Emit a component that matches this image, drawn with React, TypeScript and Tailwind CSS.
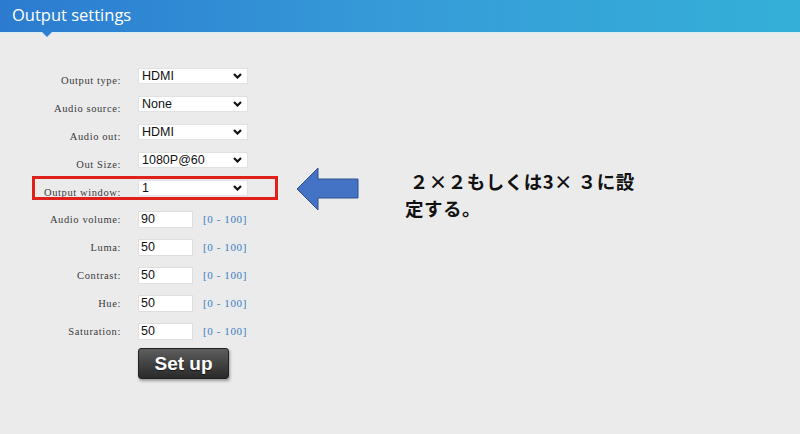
const selects = [
  { label: 'Output type:', value: 'HDMI' },
  { label: 'Audio source:', value: 'None' },
  { label: 'Audio out:', value: 'HDMI' },
  { label: 'Out Size:', value: '1080P@60' },
  { label: 'Output window:', value: '1' },
];

const inputs = [
  { label: 'Audio volume:', value: '90' },
  { label: 'Luma:', value: '50' },
  { label: 'Contrast:', value: '50' },
  { label: 'Hue:', value: '50' },
  { label: 'Saturation:', value: '50' },
];

const labelCls =
  "w-[121px] text-right font-['Liberation_Serif',serif] text-[10.5px] tracking-[0.6px] text-[#3a3a3a]";

const Chevron = () => (
  <svg width="9" height="6" viewBox="0 0 9 6" className="shrink-0">
    <polyline points="1,1 4.5,4.5 8,1" fill="none" stroke="#111" strokeWidth="2.2" />
  </svg>
);

const App = () => {
  return (
    <div className="relative w-[800px] h-[434px] overflow-hidden bg-[#ebebec] font-['Liberation_Sans',Arial,sans-serif]">
      {/* header */}
      <div className="h-[32px] bg-gradient-to-r from-[#2c7bd0] via-[#369bd8] to-[#34b0d8] flex items-center pl-[12px]">
        <span className="text-white text-[16.5px] font-['Open_Sans',sans-serif] leading-none pb-[2px]">
          Output settings
        </span>
      </div>
      <div className="h-[1px] bg-[#d6eef8]" />
      <div className="absolute left-[42px] top-[32px] w-0 h-0 border-l-[5px] border-r-[5px] border-t-[5px] border-l-transparent border-r-transparent border-t-[#2f80d1]" />

      <div className="flex pt-[35px]">
        {/* form */}
        <div className="flex flex-col w-[290px]">
          {selects.map((s) => (
            <div key={s.label} className="flex items-start h-[28px]">
              <div className={`${labelCls} pt-[5px]`}>{s.label}</div>
              <div className="ml-[17px] w-[110px] h-[16px] bg-white border border-[#e2e2e2] flex items-center justify-between pl-[3px] pr-[5px]">
                <span className="text-[12.5px] text-[#111] leading-none">{s.value}</span>
                <Chevron />
              </div>
            </div>
          ))}
          {inputs.map((s) => (
            <div key={s.label} className="flex items-start h-[28px] pt-[3px]">
              <div className={`${labelCls} leading-[17px]`}>{s.label}</div>
              <div className="ml-[17px] w-[55px] h-[17px] bg-white border border-[#dedede] flex items-center pl-[2px]">
                <span className="text-[12.5px] text-[#111] leading-none">{s.value}</span>
              </div>
              <span className="ml-[10px] leading-[17px] font-['Liberation_Serif',serif] text-[11px] tracking-[0.6px] text-[#3a80c2]">
                [0 - 100]
              </span>
            </div>
          ))}
          <div className="ml-[138px]">
            <button className="w-[91px] h-[31px] rounded-[3px] bg-gradient-to-b from-[#5e5e5e] to-[#2a2a2a] border border-[#222] shadow-[1px_2px_3px_rgba(0,0,0,0.35)] text-white font-bold text-[19px] leading-none [text-shadow:0_1px_1px_rgba(0,0,0,0.6)]">
              Set up
            </button>
          </div>
        </div>

        {/* annotation */}
        <div className="flex items-start mt-[99px] ml-[6px]">
          <svg width="64" height="44" viewBox="0 0 64 44">
            <polygon
              points="1,22 22,1 22,12 62,12 62,31 22,31 22,43"
              fill="#4472c4"
              stroke="#2f528f"
              strokeWidth="1"
            />
          </svg>
          <div className="ml-[45px] mt-[1px] font-['Noto_Sans_CJK_JP',sans-serif] font-bold text-[18.5px] tracking-[0.5px] leading-[27px] text-[#111]">
            &nbsp;２×２もしくは3× ３に設
            <br />
            定する。
          </div>
        </div>
      </div>

      {/* red highlight box */}
      <div className="absolute left-[32px] top-[176px] w-[246px] h-[24px] border-[3px] border-[#e0201c]" />
    </div>
  );
};

export default App;
